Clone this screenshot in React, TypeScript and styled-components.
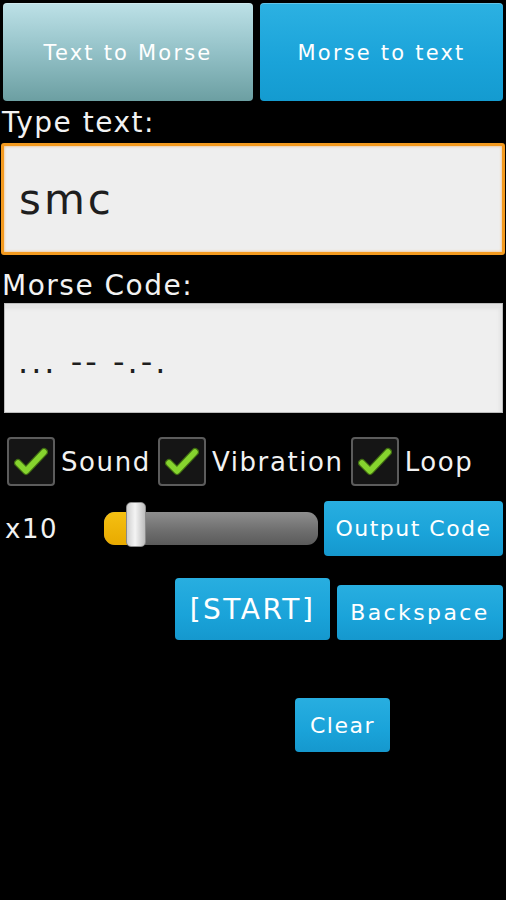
import React from "react";
import styled, { createGlobalStyle } from "styled-components";

const GlobalStyle = createGlobalStyle`
  html, body {
    margin: 0;
    padding: 0;
    background: #000;
  }
  body {
    font-family: "DejaVu Sans", "Liberation Sans", sans-serif;
    color: #fff;
  }
`;

function CheckMark() {
  return (
    <svg width="34" height="30" viewBox="0 0 34 30">
      <path
        d="M4 16 L12 24 L30 5"
        fill="none"
        stroke="#3f6a12"
        strokeWidth="8"
        strokeLinecap="round"
        strokeLinejoin="round"
      />
      <path
        d="M4 16 L12 24 L30 5"
        fill="none"
        stroke="#86d42e"
        strokeWidth="5.5"
        strokeLinecap="round"
        strokeLinejoin="round"
      />
    </svg>
  );
}

type OptionProps = { label: string };
function Option({ label }: OptionProps) {
  return (
    <OptionItem>
      <CheckBox>
        <CheckMark />
      </CheckBox>
      <OptionLabel>{label}</OptionLabel>
    </OptionItem>
  );
}

function Slider() {
  return (
    <SliderBox>
      <Track>
        <TrackFill />
      </Track>
      <Thumb />
    </SliderBox>
  );
}

export default function App() {
  return (
    <Screen>
      <GlobalStyle />
      <TabRow>
        <Tab $active={false} $width={250}>Text to Morse</Tab>
        <Tab $active>Morse to text</Tab>
      </TabRow>
      <FieldLabel $top={8} $bottom={6}>Type text:</FieldLabel>
      <TextInput>smc</TextInput>
      <FieldLabel $top={17} $bottom={3}>Morse Code:</FieldLabel>
      <MorseOutput>
        <MorseText>... -- -.-.</MorseText>
      </MorseOutput>
      <OptionRow>
        <Option label="Sound" />
        <Option label="Vibration" />
        <Option label="Loop" />
      </OptionRow>
      <SpeedRow>
        <SpeedLabel>x10</SpeedLabel>
        <Slider />
        <ActionButton $w={179} $h={55}>Output Code</ActionButton>
      </SpeedRow>
      <ControlRow>
        <ActionButton $w={155} $h={62} $size={28} $spacing={2.5}>[START]</ActionButton>
        <ActionButton $w={166} $h={55} $spacing={2.4}>Backspace</ActionButton>
      </ControlRow>
      <ClearRow>
        <ActionButton $w={95} $h={54}>Clear</ActionButton>
      </ClearRow>
    </Screen>
  );
}

const Screen = styled.div`
  width: 506px;
  height: 900px;
  background: #000;
  overflow: hidden;
`;

const TabRow = styled.div`
  display: flex;
  gap: 7px;
  padding: 3px 3px 0 3px;
`;

const Tab = styled.div<{ $active?: boolean; $width?: number }>`
  ${(p) => (p.$width ? `width: ${p.$width}px;` : "flex: 1;")}
  height: 98px;
  border-radius: 4px;
  display: flex;
  align-items: center;
  justify-content: center;
  padding-top: 2px;
  box-sizing: border-box;
  font-size: 21px;
  letter-spacing: 2.2px;
  color: #fff;
  background: ${(p) =>
    p.$active
      ? "linear-gradient(to bottom, #2cb1e2, #1aa3d9 60%, #149bd0)"
      : "linear-gradient(to bottom, #bde1e7, #93c1c7 50%, #6c9fa2)"};
  box-shadow: inset 0 1px 0 rgba(255, 255, 255, 0.25);
`;

const FieldLabel = styled.div<{ $top: number; $bottom: number }>`
  margin: ${(p) => p.$top}px 0 ${(p) => p.$bottom}px 2px;
  font-size: 28px;
  line-height: 28px;
  letter-spacing: 1.5px;
  color: #f2f2f2;
`;

const TextInput = styled.div`
  margin: 0 1px;
  height: 112px;
  box-sizing: border-box;
  border: 3px solid #f39a1f;
  border-radius: 3px;
  background: #eeeeee;
  box-shadow: inset 0 0 3px rgba(240, 140, 20, 0.6);
  display: flex;
  align-items: center;
  padding-left: 15px;
  font-size: 42px;
  letter-spacing: 3px;
  color: #1e1e1e;
`;

const MorseOutput = styled.div`
  margin: 0 3px 0 4px;
  height: 110px;
  box-sizing: border-box;
  border: 1px solid #bdbdbd;
  background: #efefef;
  box-shadow: inset 0 9px 3px -4px #e3e3e3, inset -5px 0 3px -2px #e6e6e6;
  display: flex;
  align-items: center;
  padding: 8px 0 0 13px;
`;

const MorseText = styled.span`
  font-size: 32px;
  letter-spacing: 3px;
  color: #1e1e1e;
`;

const OptionRow = styled.div`
  display: flex;
  gap: 7px;
  margin-top: 24px;
  padding-left: 7px;
`;

const OptionItem = styled.div`
  display: flex;
  align-items: center;
  gap: 6px;
`;

const CheckBox = styled.div`
  width: 48px;
  height: 49px;
  box-sizing: border-box;
  border: 2px solid #5c5c5c;
  border-radius: 4px;
  background: #151515;
  display: flex;
  align-items: center;
  justify-content: center;
`;

const OptionLabel = styled.span`
  font-size: 26px;
  letter-spacing: 1.6px;
  color: #f2f2f2;
`;

const SpeedRow = styled.div`
  display: flex;
  align-items: center;
  margin-top: 15px;
  padding: 0 3px 0 5px;
`;

const SpeedLabel = styled.span`
  width: 99px;
  font-size: 26px;
  letter-spacing: 1.5px;
  color: #f2f2f2;
`;

const SliderBox = styled.div`
  position: relative;
  width: 214px;
  height: 55px;
  margin-right: 6px;
  display: flex;
  align-items: center;
`;

const Track = styled.div`
  width: 100%;
  height: 33px;
  border-radius: 11px;
  background: linear-gradient(to bottom, #8e8e8e, #6f6f6f 55%, #5a5a5a);
  overflow: hidden;
`;

const TrackFill = styled.div`
  width: 28px;
  height: 100%;
  background: linear-gradient(to bottom, #f5c012, #e8aa00);
`;

const Thumb = styled.div`
  position: absolute;
  left: 22px;
  top: 0px;
  width: 20px;
  height: 45px;
  margin-top: 1px;
  box-sizing: border-box;
  border-radius: 5px;
  border: 1px solid #8a8a8a;
  background: linear-gradient(to right, #cfcfcf, #f4f4f4 45%, #bdbdbd);
`;

const ActionButton = styled.div<{
  $w: number;
  $h: number;
  $size?: number;
  $spacing?: number;
}>`
  width: ${(p) => p.$w}px;
  height: ${(p) => p.$h}px;
  flex: none;
  border-radius: 4px;
  display: flex;
  align-items: center;
  justify-content: center;
  font-size: ${(p) => p.$size ?? 22}px;
  letter-spacing: ${(p) => p.$spacing ?? 1.5}px;
  color: #fff;
  background: linear-gradient(to bottom, #28aee0, #1aa3d9 60%, #1598ce);
`;

const ControlRow = styled.div`
  display: flex;
  justify-content: flex-end;
  align-items: flex-end;
  gap: 7px;
  margin-top: 22px;
  padding-right: 3px;
`;

const ClearRow = styled.div`
  display: flex;
  margin-top: 58px;
  padding-left: 295px;
`;
